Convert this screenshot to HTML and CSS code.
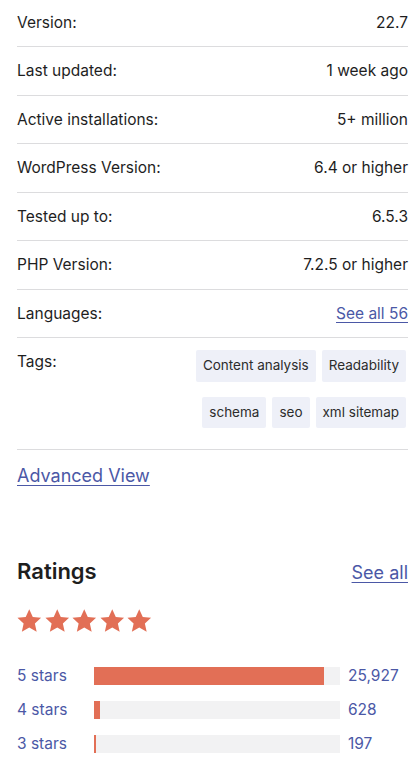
FILE: index.html
```html
<!DOCTYPE html>
<html lang="en">

<head>
    <meta charset="UTF-8">
    <meta name="viewport" content="width=device-width, initial-scale=1.0">
    <title>Plugin details</title>
    <link rel="stylesheet" href="styles.css">
</head>

<body>
    <ul class="meta">
        <li class="meta-row"><span>Version:</span> <strong>22.7</strong></li>
        <li class="meta-row"><span>Last updated:</span> <strong>1 week ago</strong></li>
        <li class="meta-row"><span>Active installations:</span> <strong>5+ million</strong></li>
        <li class="meta-row"><span>WordPress Version:</span> <strong>6.4 or higher</strong></li>
        <li class="meta-row"><span>Tested up to:</span> <strong>6.5.3</strong></li>
        <li class="meta-row"><span>PHP Version:</span> <strong>7.2.5 or higher</strong></li>
        <li class="meta-row"><span>Languages:</span> <a href="#" class="link">See all 56</a></li>
        <li class="meta-row tags-row">
            <span>Tags:</span>
            <div class="tags">
                <a href="#" class="tag">Content analysis</a>
                <a href="#" class="tag">Readability</a>
                <a href="#" class="tag">schema</a>
                <a href="#" class="tag">seo</a>
                <a href="#" class="tag">xml sitemap</a>
            </div>
        </li>
    </ul>

    <a href="#" class="link advanced">Advanced View</a>

    <section class="ratings">
        <header class="ratings-head">
            <h2>Ratings</h2>
            <a href="#" class="link see-all">See all</a>
        </header>

        <div class="stars">
            <svg viewBox="0 0 24 24"><path d="M12 1.2l3.2 6.9 7.5.8-5.6 5.1 1.6 7.4L12 17.6l-6.7 3.8 1.6-7.4-5.6-5.1 7.5-.8z"/></svg>
            <svg viewBox="0 0 24 24"><path d="M12 1.2l3.2 6.9 7.5.8-5.6 5.1 1.6 7.4L12 17.6l-6.7 3.8 1.6-7.4-5.6-5.1 7.5-.8z"/></svg>
            <svg viewBox="0 0 24 24"><path d="M12 1.2l3.2 6.9 7.5.8-5.6 5.1 1.6 7.4L12 17.6l-6.7 3.8 1.6-7.4-5.6-5.1 7.5-.8z"/></svg>
            <svg viewBox="0 0 24 24"><path d="M12 1.2l3.2 6.9 7.5.8-5.6 5.1 1.6 7.4L12 17.6l-6.7 3.8 1.6-7.4-5.6-5.1 7.5-.8z"/></svg>
            <svg viewBox="0 0 24 24"><path d="M12 1.2l3.2 6.9 7.5.8-5.6 5.1 1.6 7.4L12 17.6l-6.7 3.8 1.6-7.4-5.6-5.1 7.5-.8z"/></svg>
        </div>

        <ul class="counts">
            <li class="count-row">
                <a href="#" class="count-label">5 stars</a>
                <span class="bar"><span class="bar-fill" style="width: 93.5%"></span></span>
                <span class="count-num">25,927</span>
            </li>
            <li class="count-row">
                <a href="#" class="count-label">4 stars</a>
                <span class="bar"><span class="bar-fill" style="width: 2.5%"></span></span>
                <span class="count-num">628</span>
            </li>
            <li class="count-row">
                <a href="#" class="count-label">3 stars</a>
                <span class="bar"><span class="bar-fill" style="width: 0.8%"></span></span>
                <span class="count-num">197</span>
            </li>
        </ul>
    </section>
</body>

</html>
```

FILE: styles.css
```css
* {
    margin: 0;
    padding: 0;
    box-sizing: border-box;
}

body {
    padding: 0 8px 0 17px;
    font-family: Inter, "Noto Sans", sans-serif;
    font-size: 15.5px;
    color: #1e1e1e;
    background: #fff;
}

ul {
    list-style: none;
}

.link {
    color: #4b58a6;
    text-decoration: underline;
    text-underline-offset: 3px;
    text-decoration-thickness: 1px;
}

.meta {
    margin-top: -1.5px;
}

.meta-row {
    display: flex;
    justify-content: space-between;
    align-items: flex-start;
    padding: 12px 0;
    line-height: 23.5px;
    border-bottom: 1px solid #dcdcde;
}

.meta-row strong {
    font-weight: 400;
}

.tags-row {
    padding-bottom: 21px;
}

.tags {
    display: flex;
    flex-wrap: wrap;
    justify-content: flex-end;
    gap: 15px 6px;
    max-width: 216px;
    margin-right: 2px;
}

.tag {
    display: block;
    padding: 4px 7px;
    font-size: 13.5px;
    color: #2c2c2c;
    text-decoration: none;
    background: #eef0f8;
    border-radius: 2px;
}

.advanced {
    display: inline-block;
    margin-top: 14px;
    font-size: 18px;
    line-height: 24px;
}

.ratings {
    margin-top: 69px;
}

.ratings-head {
    display: flex;
    justify-content: space-between;
    align-items: baseline;
}

.ratings-head h2 {
    font-size: 22px;
    font-weight: 600;
    line-height: 28px;
}

.see-all {
    font-size: 18px;
}

.stars {
    display: flex;
    gap: 1px;
    margin-top: 23px;
    margin-left: -1px;
}

.stars svg {
    width: 26.5px;
    height: 26.5px;
    fill: #e26f56;
}

.counts {
    margin-top: 24px;
}

.count-row {
    display: flex;
    align-items: center;
    height: 34px;
}

.count-label {
    width: 77px;
    color: #4b58a6;
    text-decoration: none;
}

.bar {
    display: block;
    width: 246px;
    height: 18px;
    background: #f2f2f3;
}

.bar-fill {
    display: block;
    height: 100%;
    min-width: 2px;
    background: #e26f56;
}

.count-num {
    margin-left: 8px;
    color: #4b58a6;
}
```
